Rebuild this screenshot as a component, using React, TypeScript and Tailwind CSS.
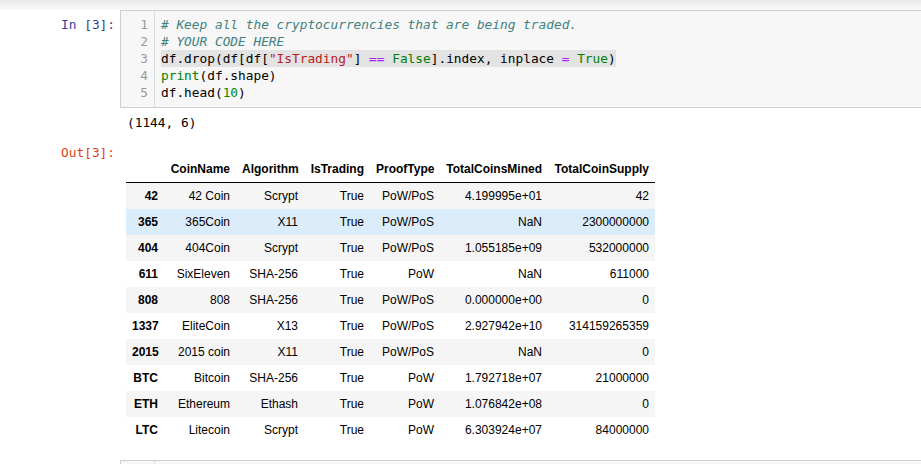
import { JSX } from "react";

const mono = { fontFamily: '"DejaVu Sans Mono", "Liberation Mono", monospace' };

type Row = [string, string, string, string, string, string, string];

const rows: Row[] = [
  ["42", "42 Coin", "Scrypt", "True", "PoW/PoS", "4.199995e+01", "42"],
  ["365", "365Coin", "X11", "True", "PoW/PoS", "NaN", "2300000000"],
  ["404", "404Coin", "Scrypt", "True", "PoW/PoS", "1.055185e+09", "532000000"],
  ["611", "SixEleven", "SHA-256", "True", "PoW", "NaN", "611000"],
  ["808", "808", "SHA-256", "True", "PoW/PoS", "0.000000e+00", "0"],
  ["1337", "EliteCoin", "X13", "True", "PoW/PoS", "2.927942e+10", "314159265359"],
  ["2015", "2015 coin", "X11", "True", "PoW/PoS", "NaN", "0"],
  ["BTC", "Bitcoin", "SHA-256", "True", "PoW", "1.792718e+07", "21000000"],
  ["ETH", "Ethereum", "Ethash", "True", "PoW", "1.076842e+08", "0"],
  ["LTC", "Litecoin", "Scrypt", "True", "PoW", "6.303924e+07", "84000000"],
];

const headers = ["", "CoinName", "Algorithm", "IsTrading", "ProofType", "TotalCoinsMined", "TotalCoinSupply"];
const widths = ["w-[38px]", "w-[72px]", "w-[68px]", "w-[66px]", "w-[70px]", "w-[108px]", "w-[107px]"];

const CodeLines = (): JSX.Element => (
  <div className="flex-1 pl-[6px] pt-[5px] pb-[6px] text-[12.8px] text-black" style={mono}>
    <div className="h-[17px] leading-[17px] whitespace-pre italic text-[#408080]">
      # Keep all the cryptocurrencies that are being traded.
    </div>
    <div className="h-[17px] leading-[17px] whitespace-pre italic text-[#408080]"># YOUR CODE HERE</div>
    <div className="h-[17px] leading-[17px] whitespace-pre">
      <span className="bg-[#e3e3e3] py-[1px]">
        df.drop(df[df[<span className="text-[#ba2121]">"IsTrading"</span>]{" "}
        <span className="text-[#aa22ff]">==</span> <span className="text-[#008000]">False</span>
        ].index, inplace <span className="text-[#aa22ff]">=</span>{" "}
        <span className="text-[#008000]">True</span>)
      </span>
    </div>
    <div className="h-[17px] leading-[17px] whitespace-pre">
      <span className="text-[#008000]">print</span>(df.shape)
    </div>
    <div className="h-[17px] leading-[17px] whitespace-pre">
      df.head(<span className="text-[#008800]">10</span>)
    </div>
  </div>
);

const App = (): JSX.Element => {
  return (
    <div className="w-[921px] h-[464px] overflow-hidden bg-white">
      <div className="h-[10px] bg-gradient-to-b from-[#e9e9e9] to-[#f9f9f9]" />

      {/* input cell */}
      <div className="flex">
        <div className="w-[120px] shrink-0 pr-[5px] pt-[6px] text-right text-[12.8px] leading-[17px] text-[#303f9f]" style={mono}>
          In [3]:
        </div>
        <div className="flex flex-1 mr-[-20px] border border-[#cfcfcf] bg-[#f7f7f7]">
          <div className="w-[34px] shrink-0 border-r border-[#dddddd] pt-[5px] pr-[6px] text-right text-[12.8px] text-[#999999]" style={mono}>
            {[1, 2, 3, 4, 5].map((n) => (
              <div key={n} className="h-[17px] leading-[17px]">{n}</div>
            ))}
          </div>
          <CodeLines />
        </div>
      </div>

      {/* stdout */}
      <div className="flex mt-[6px]">
        <div className="w-[120px] shrink-0" />
        <div className="pl-[7px] h-[17px] leading-[17px] text-[12.8px] text-black whitespace-pre" style={mono}>
          (1144, 6)
        </div>
      </div>

      {/* result */}
      <div className="flex">
        <div className="w-[120px] shrink-0 pr-[5px] pt-[13px] text-right text-[12.8px] leading-[17px] text-[#d84315]" style={mono}>
          Out[3]:
        </div>
        <div className="pt-[25px] pl-[6px]">
          <table
            className="table-fixed border-collapse text-[12px] text-black w-[529px]"
            style={{ fontFamily: '"Liberation Sans", Arial, sans-serif' }}
          >
            <thead>
              <tr className="border-b border-black">
                {headers.map((h, i) => (
                  <th key={i} className={`${widths[i]} px-[6px] py-[6px] leading-[14px] text-right font-bold whitespace-nowrap`}>
                    {h}
                  </th>
                ))}
              </tr>
            </thead>
            <tbody>
              {rows.map((r, i) => (
                <tr
                  key={r[0]}
                  className={r[0] === "365" ? "bg-[#dbecfa]" : i % 2 === 0 ? "bg-[#f5f5f5]" : "bg-white"}
                >
                  {r.map((c, j) => (
                    <td
                      key={j}
                      className={`px-[6px] py-[6px] leading-[14px] text-right whitespace-nowrap ${j === 0 ? "font-bold" : ""}`}
                    >
                      {c}
                    </td>
                  ))}
                </tr>
              ))}
            </tbody>
          </table>
        </div>
      </div>

      {/* next cell */}
      <div className="flex mt-[17px]">
        <div className="w-[120px] shrink-0" />
        <div className="flex flex-1 mr-[-20px] h-[40px] border border-[#cfcfcf] bg-[#f7f7f7]">
          <div className="w-[34px] shrink-0 border-r border-[#dddddd]" />
        </div>
      </div>
    </div>
  );
};

export default App;
